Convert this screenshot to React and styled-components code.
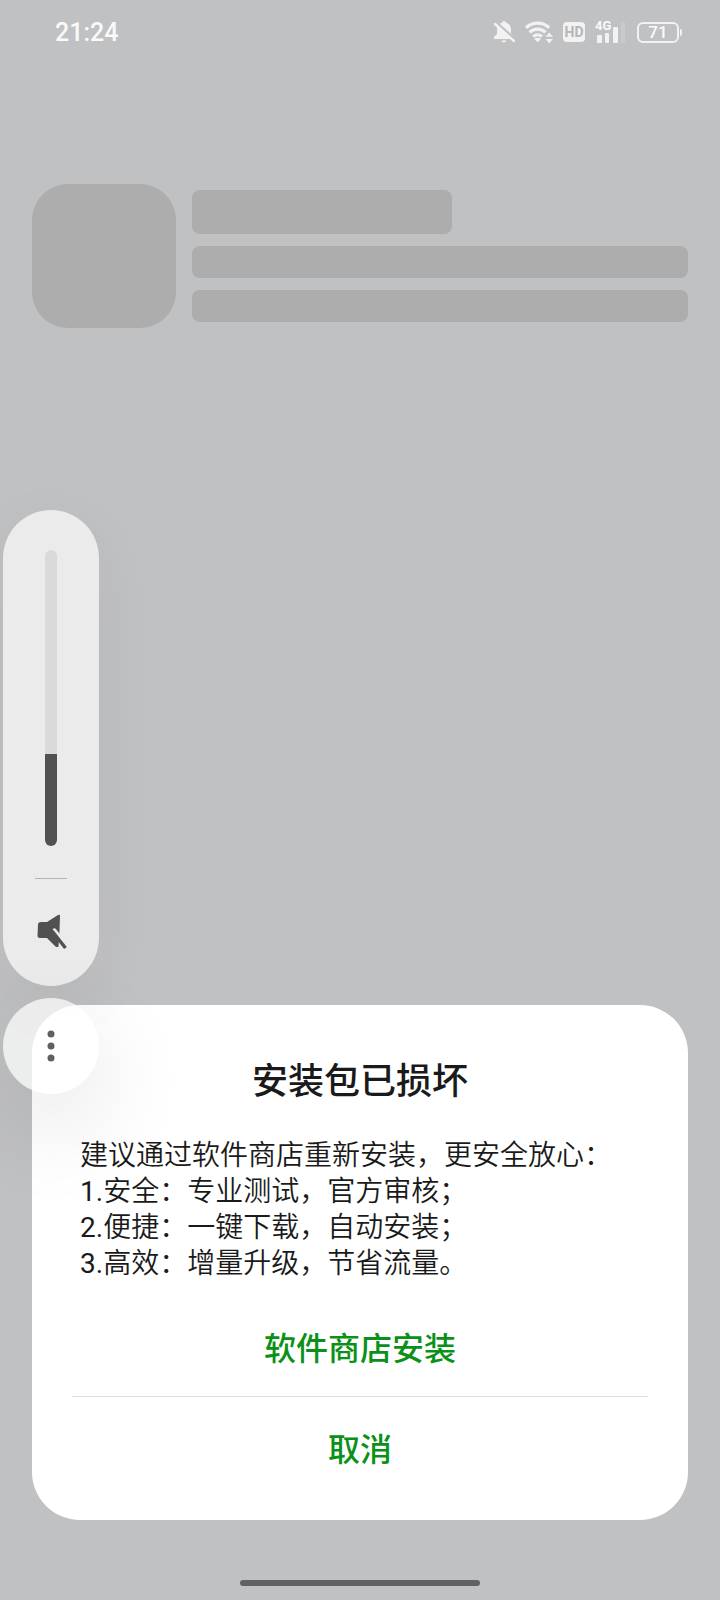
import React, { useState } from "react";
import styled, { createGlobalStyle } from "styled-components";

const benefits = [
  "安全：专业测试，官方审核；",
  "便捷：一键下载，自动安装；",
  "高效：增量升级，节省流量。",
];

const GlobalStyle = createGlobalStyle`
  * {
    box-sizing: border-box;
  }

  body {
    margin: 0;
    background: #c0c1c3;
    color: #1a1a1a;
    font-family: Roboto, "Noto Sans CJK SC", sans-serif;
  }

  button {
    padding: 0;
    border: none;
    background: none;
    font-family: inherit;
    cursor: pointer;
  }
`;

const Page = styled.div`
  position: relative;
  display: flex;
  flex-direction: column;
  min-height: 100vh;
  overflow: hidden;
`;

const StatusBar = styled.header`
  display: flex;
  align-items: center;
  justify-content: space-between;
  height: 64px;
  padding: 0 38px 0 55px;
  color: #fafafa;
`;

const Clock = styled.time`
  font-size: 25px;
  font-weight: 500;
`;

const StatusIcons = styled.div`
  display: flex;
  align-items: center;
  gap: 10px;

  svg {
    display: block;
  }
`;

const HdBadge = styled.span`
  width: 22px;
  border-radius: 4px;
  background: #f2f2f3;
  color: #b4b5b7;
  font-size: 14px;
  font-weight: 700;
  line-height: 20px;
  text-align: center;
`;

const Signal = styled.div`
  position: relative;
  display: flex;
`;

const NetworkType = styled.span`
  position: absolute;
  top: -2px;
  left: 0;
  font-size: 13px;
  font-weight: 700;
  line-height: 13px;
`;

const Battery = styled.div`
  display: flex;
  align-items: center;
  gap: 1px;

  &::after {
    content: "";
    width: 2px;
    height: 7px;
    border-radius: 0 2px 2px 0;
    background: #f2f2f3;
  }
`;

const BatteryLevel = styled.span`
  width: 42px;
  border: 2px solid #f2f2f3;
  border-radius: 6px;
  font-size: 17px;
  font-weight: 500;
  line-height: 17px;
  text-align: center;
`;

const SkeletonCard = styled.main`
  display: flex;
  align-items: center;
  gap: 16px;
  padding: 120px 32px 0;
`;

const SkeletonIcon = styled.div`
  flex: none;
  width: 144px;
  height: 144px;
  border-radius: 36px;
  background: #adadad;
`;

const SkeletonLines = styled.div`
  flex: 1;
  display: flex;
  flex-direction: column;
  gap: 12px;
`;

const SkeletonLine = styled.div`
  width: ${(props) => (props.$title ? "260px" : "100%")};
  height: ${(props) => (props.$title ? "44px" : "32px")};
  border-radius: 8px;
  background: #adadad;
`;

const Sheet = styled.section`
  margin: auto 32px 60px;
  padding: 51px 40px 24px;
  border-radius: 48px;
  background: #fff;
`;

const SheetTitle = styled.h1`
  margin: 0 0 30px;
  font-size: 36px;
  font-weight: 500;
  line-height: 52px;
  text-align: center;
`;

const SheetBody = styled.div`
  margin-bottom: 14px;
  padding: 0 8px;
  font-size: 28px;
  font-weight: 350;
  line-height: 36px;

  p {
    margin: 0;
  }
`;

const ItemNumber = styled.span`
  font-weight: 400;
`;

const SheetButton = styled.button`
  display: block;
  width: 100%;
  height: 100px;
  color: #0a9117;
  font-size: 32px;
  font-weight: 500;

  & + & {
    border-top: 1px solid #dedede;
  }
`;

const HomeBar = styled.div`
  align-self: center;
  width: 240px;
  height: 6px;
  margin-bottom: 14px;
  border-radius: 3px;
  background: #606163;
`;

// Floats over the page at the left edge
const VolumeOverlay = styled.aside`
  position: absolute;
  top: 510px;
  left: 3px;
  display: flex;
  flex-direction: column;
  gap: 12px;
  width: 96px;
`;

const VolumePanel = styled.div`
  display: flex;
  flex-direction: column;
  align-items: center;
  padding: 40px 0 35px;
  border-radius: 48px;
  background: #ebebeb;
  box-shadow: 0 16px 64px rgba(0, 0, 0, 0.05);
`;

const VolumeSlider = styled.input`
  appearance: none;
  writing-mode: vertical-lr;
  direction: rtl;
  width: 12px;
  height: 296px;
  margin: 0 0 32px;
  border-radius: 6px;
  background: linear-gradient(
    to top,
    #515151 ${(props) => props.value}%,
    #dadada ${(props) => props.value}%
  );

  &::-webkit-slider-thumb {
    appearance: none;
    width: 12px;
    height: 1px;
  }
`;

const MuteButton = styled.button`
  display: flex;
  justify-content: center;
  padding-top: 34px;
  width: 32px;
  border-top: 1px solid #b4b4b4;
`;

const MoreButton = styled.button`
  display: flex;
  align-items: center;
  justify-content: center;
  height: 96px;
  border-radius: 50%;
  background: rgba(255, 255, 255, 0.7);
  box-shadow: 0 32px 96px rgba(0, 0, 0, 0.12);
`;

const BellOffIcon = () => (
  <svg width="22" height="24" viewBox="0 0 22 24" fill="#f2f2f3">
    <path d="M11 1c-1 0-1.700.6-1.700 1.600C6 3.500 4 6 4 9.500V14l-3 3v2h20v-2l-3-3V9.500c0-3.500-2-6-5.300-6.900C12.700 1.600 12 1 11 1zM8.500 20.500a2.600 2.600 0 0 0 5 0z" />
    <path d="M2 1.500l20 18" stroke="#c0c1c3" strokeWidth="3" />
    <path d="M2 4l19 17" stroke="#f2f2f3" strokeWidth="2.500" strokeLinecap="round" />
  </svg>
);

const WifiIcon = () => (
  <svg width="28" height="24" viewBox="0 0 30 24" fill="none" stroke="#f2f2f3" strokeWidth="3.500">
    <path d="M1 7.500a18 18 0 0 1 25 0" />
    <path d="M5 12.500a12 12 0 0 1 17 0" />
    <path d="M9 17a6.500 6.500 0 0 1 9 0" />
    <path d="M13.500 23l-3.500-3.500a5 5 0 0 1 7 0z" fill="#f2f2f3" stroke="none" />
    <path d="M22 17l4-4.500 4 4.500zM22 19.500l4 4.500 4-4.500z" fill="#f2f2f3" stroke="none" />
  </svg>
);

const SignalIcon = () => (
  <svg width="32" height="22" viewBox="0 0 32 22" fill="#f2f2f3">
    <rect x="2" y="14" width="5" height="8" rx="1" />
    <rect x="10" y="12" width="4" height="10" rx="1" />
    <rect x="18" y="6" width="5" height="16" rx="1" />
    <rect x="26" y="1" width="4" height="21" rx="1" opacity="0.2" />
  </svg>
);

const MuteIcon = () => (
  <svg width="32" height="38" viewBox="-1 0 32 38">
    <path
      d="M5 9h6L22 2q2-1 2 1l-.5 15-1 15.500q-1 1.200-3 0L11 25H4q-2.500 0-2.500-2.500L2 11.500Q2 9 5 9z"
      fill="#515151"
    />
    <path d="M18.500 17l9 11.500" stroke="#ebebeb" strokeWidth="3.500" strokeLinecap="round" />
    <path d="M16 18l13.500 17" stroke="#515151" strokeWidth="3.500" />
  </svg>
);

const MoreIcon = () => (
  <svg width="8" height="32" viewBox="0 0 8 32" fill="#606060">
    <circle cx="4" cy="4" r="3.500" />
    <circle cx="4" cy="16" r="3.500" />
    <circle cx="4" cy="28" r="3.500" />
  </svg>
);

const App = () => {
  const [volume, setVolume] = useState(31);

  return (
    <>
      <GlobalStyle />
      <Page>
        {/* Status bar */}
        <StatusBar>
          <Clock>21:24</Clock>
          <StatusIcons>
            <BellOffIcon />
            <WifiIcon />
            <HdBadge>HD</HdBadge>
            <Signal>
              <NetworkType>4G</NetworkType>
              <SignalIcon />
            </Signal>
            <Battery>
              <BatteryLevel>71</BatteryLevel>
            </Battery>
          </StatusIcons>
        </StatusBar>

        {/* Loading placeholder */}
        <SkeletonCard>
          <SkeletonIcon />
          <SkeletonLines>
            <SkeletonLine $title />
            <SkeletonLine />
            <SkeletonLine />
          </SkeletonLines>
        </SkeletonCard>

        {/* Install dialog */}
        <Sheet role="dialog" aria-labelledby="sheet-title">
          <SheetTitle id="sheet-title">安装包已损坏</SheetTitle>
          <SheetBody>
            <p>建议通过软件商店重新安装，更安全放心：</p>
            {benefits.map((text, i) => (
              <p key={text}>
                <ItemNumber>{i + 1}.</ItemNumber>
                {text}
              </p>
            ))}
          </SheetBody>
          <SheetButton>软件商店安装</SheetButton>
          <SheetButton>取消</SheetButton>
        </Sheet>
        <HomeBar />

        {/* Volume */}
        <VolumeOverlay>
          <VolumePanel>
            <VolumeSlider
              type="range"
              min="0"
              max="100"
              aria-label="音量"
              value={volume}
              onChange={(e) => setVolume(e.target.value)}
            />
            <MuteButton aria-label="静音" onClick={() => setVolume(0)}>
              <MuteIcon />
            </MuteButton>
          </VolumePanel>
          <MoreButton aria-label="更多">
            <MoreIcon />
          </MoreButton>
        </VolumeOverlay>
      </Page>
    </>
  );
};

export default App;
